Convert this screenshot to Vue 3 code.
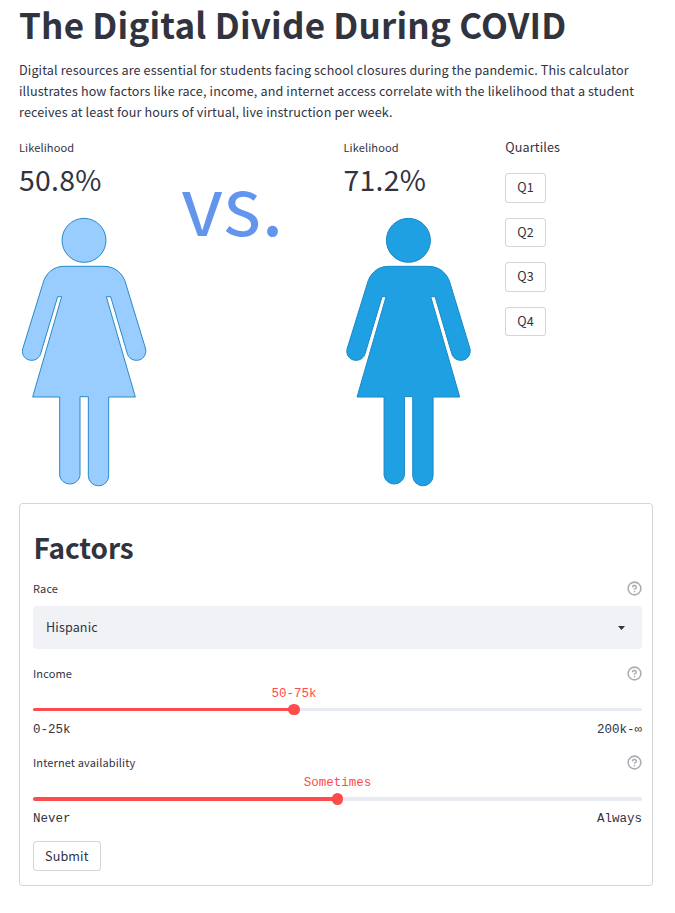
<script setup>
import { ref } from 'vue'

const people = ref([
  { value: '50.8%', tone: 'light', shift: 0 },
  { value: '71.2%', tone: 'dark', shift: 1.2 },
])
const quartiles = ['Q1', 'Q2', 'Q3', 'Q4']
const sliders = ref([
  { label: 'Income', value: '50-75k', min: '0-25k', max: '200k-∞', percent: 42.86, size: 'thin' },
  { label: 'Internet availability', value: 'Sometimes', min: 'Never', max: 'Always', percent: 50, size: 'thick' },
])
const body =
  'M162 184H282C315 184 340 205 348 238L407 432C410 450 398 466 380 466C367 466 356 459 352 446L302 275H289L376 576H296V812A30.5 30.5 0 0 1 235 812V575H210V812A31 30.5 0 0 1 149 812V576H68L155 275H143L92 446C88 459 77 466 65 466C46 466 34 450 38 432L98 238C106 205 130 184 162 184Z'
</script>

<template>
  <main class="page">
    <h1>The Digital Divide During COVID</h1>
    <p class="intro">
      Digital resources are essential for students facing school closures during the pandemic. This calculator<br />
      illustrates how factors like race, income, and internet access correlate with the likelihood that a student<br />
      receives at least four hours of virtual, live instruction per week.
    </p>

    <section class="columns">
      <div v-for="(p, i) in people" :key="p.tone" class="metric" :class="'col-' + i">
        <div class="metric-label">Likelihood</div>
        <div class="metric-value">{{ p.value }}</div>
        <svg class="figure" :class="p.tone" viewBox="27 27 396 825" width="132" height="275">
          <g :transform="`translate(${p.shift} 0)`">
            <circle cx="222" cy="106" r="66" />
            <path :d="body" />
          </g>
        </svg>
      </div>
      <div class="versus">vs.</div>
      <div class="quartiles">
        <div class="quartiles-title">Quartiles</div>
        <button v-for="q in quartiles" :key="q" class="btn">{{ q }}</button>
      </div>
    </section>

    <form class="factors" @submit.prevent>
      <h2>Factors</h2>
      <div class="label-row">
        <span>Race</span>
        <svg class="help" viewBox="0 0 24 24"><circle cx="12" cy="12" r="10.2" /><path d="M9.1 9a3 3 0 0 1 5.8 1c0 2-3 3-3 3M12 17h.01" /></svg>
      </div>
      <div class="select">
        <span>Hispanic</span>
        <svg width="7" height="4" viewBox="0 0 7 4"><path d="M0 0H7L3.5 4Z" fill="#31333f" /></svg>
      </div>
      <div v-for="s in sliders" :key="s.label" class="slider" :class="s.size">
        <div class="label-row">
          <span>{{ s.label }}</span>
          <svg class="help" viewBox="0 0 24 24"><circle cx="12" cy="12" r="10.2" /><path d="M9.1 9a3 3 0 0 1 5.8 1c0 2-3 3-3 3M12 17h.01" /></svg>
        </div>
        <div class="track">
          <div class="fill" :style="{ width: s.percent + '%' }"></div>
          <div class="thumb" :style="{ left: s.percent + '%' }"><span class="thumb-value">{{ s.value }}</span></div>
        </div>
        <div class="ends"><span>{{ s.min }}</span><span>{{ s.max }}</span></div>
      </div>
      <button class="btn submit">Submit</button>
    </form>
  </main>
</template>

<style>
body {
  margin: 0;
  background: #fff;
}
</style>

<style scoped>
* {
  box-sizing: border-box;
}
.page {
  width: 675px;
  height: 913px;
  padding: 1px 22px 0 19px;
  color: #31333f;
  font-family: "Noto Sans CJK SC", "Noto Sans", sans-serif;
  font-size: 12.6px;
  letter-spacing: 0.13px;
}
h1 {
  margin: 0;
  font-size: 35px;
  line-height: 46px;
  font-weight: 700;
  letter-spacing: 0.2px;
  white-space: nowrap;
}
.intro {
  margin: 12px 0 0;
  line-height: 21px;
  white-space: nowrap;
}
.columns {
  display: grid;
  grid-template-columns: repeat(4, 148.1px);
  gap: 14px;
  height: 367px;
  margin-top: 14px;
}
.metric {
  grid-row: 1;
}
.col-0 {
  grid-column: 1;
}
.col-1 {
  grid-column: 3;
  padding-left: 0.3px;
}
.metric-label {
  font-size: 11px;
  line-height: 22px;
}
.metric-value {
  font-size: 28.4px;
  line-height: 42px;
  letter-spacing: 0.25px;
}
.figure {
  display: block;
  margin-top: 14px;
}
.light {
  fill: #99ccff;
  stroke: #2b8ac6;
  stroke-width: 3;
}
.dark {
  fill: #1ea0e2;
  stroke: #1889c8;
  stroke-width: 3;
}
.versus {
  grid-column: 2;
  grid-row: 1;
  padding-top: 15px;
  color: #6495ed;
  font-size: 81px;
  line-height: 100px;
  letter-spacing: 0;
}
.quartiles {
  grid-column: 4;
  grid-row: 1;
  display: flex;
  flex-direction: column;
  align-items: flex-start;
  gap: 15px;
}
.quartiles-title {
  line-height: 21px;
  margin-bottom: 1px;
}
.btn {
  height: 29.5px;
  padding: 0 11px 2px;
  border: 1px solid rgba(49, 51, 63, 0.2);
  border-radius: 3.5px;
  background: #fff;
  color: inherit;
  font: inherit;
  letter-spacing: inherit;
  line-height: 25px;
}
.factors {
  width: 634px;
  height: 383px;
  padding: 23px 10px 0 13px;
  border: 1px solid rgba(49, 51, 63, 0.2);
  border-radius: 3.5px;
}
h2 {
  margin: 0 0 11px;
  padding-left: 0.5px;
  font-size: 28px;
  line-height: 40px;
  font-weight: 600;
  letter-spacing: -0.1px;
}
.label-row {
  display: flex;
  justify-content: space-between;
  align-items: center;
  height: 20px;
  font-size: 11px;
  line-height: 20px;
}
.help {
  width: 15px;
  height: 15px;
  margin-top: 1px;
  fill: none;
  stroke: #acadb2;
  stroke-width: 2.5;
  stroke-linecap: round;
  stroke-linejoin: round;
}
.select {
  display: flex;
  justify-content: space-between;
  align-items: center;
  height: 43px;
  margin: 8px 0 14px;
  padding: 0 17px 0 13px;
  border-radius: 3.5px;
  background: #f0f2f6;
}
.select span {
  padding-bottom: 2px;
}
.slider {
  height: 89px;
}
.track {
  position: relative;
  height: 3px;
  margin: 25px 0 9px;
  border-radius: 2px;
  background: #e6eaf1;
}
.thick .track {
  height: 4px;
  margin-bottom: 8px;
}
.fill {
  height: 100%;
  border-radius: 2px;
  background: #ff4b4b;
}
.thumb {
  position: absolute;
  top: 50%;
  width: 11.5px;
  height: 11.5px;
  margin: -5.75px 0 0 -5.75px;
  border-radius: 50%;
  background: #ff4b4b;
}
.thumb-value {
  position: absolute;
  bottom: 4.5px;
  left: 50%;
  transform: translateX(-50%);
  color: #ff4b4b;
  font: 12.5px/34px "Liberation Mono", monospace;
  letter-spacing: 0;
  white-space: nowrap;
}
.ends {
  display: flex;
  justify-content: space-between;
  font: 12.5px/20px "Liberation Mono", monospace;
  letter-spacing: 0;
}
.submit {
  display: block;
  height: 30px;
}
</style>
